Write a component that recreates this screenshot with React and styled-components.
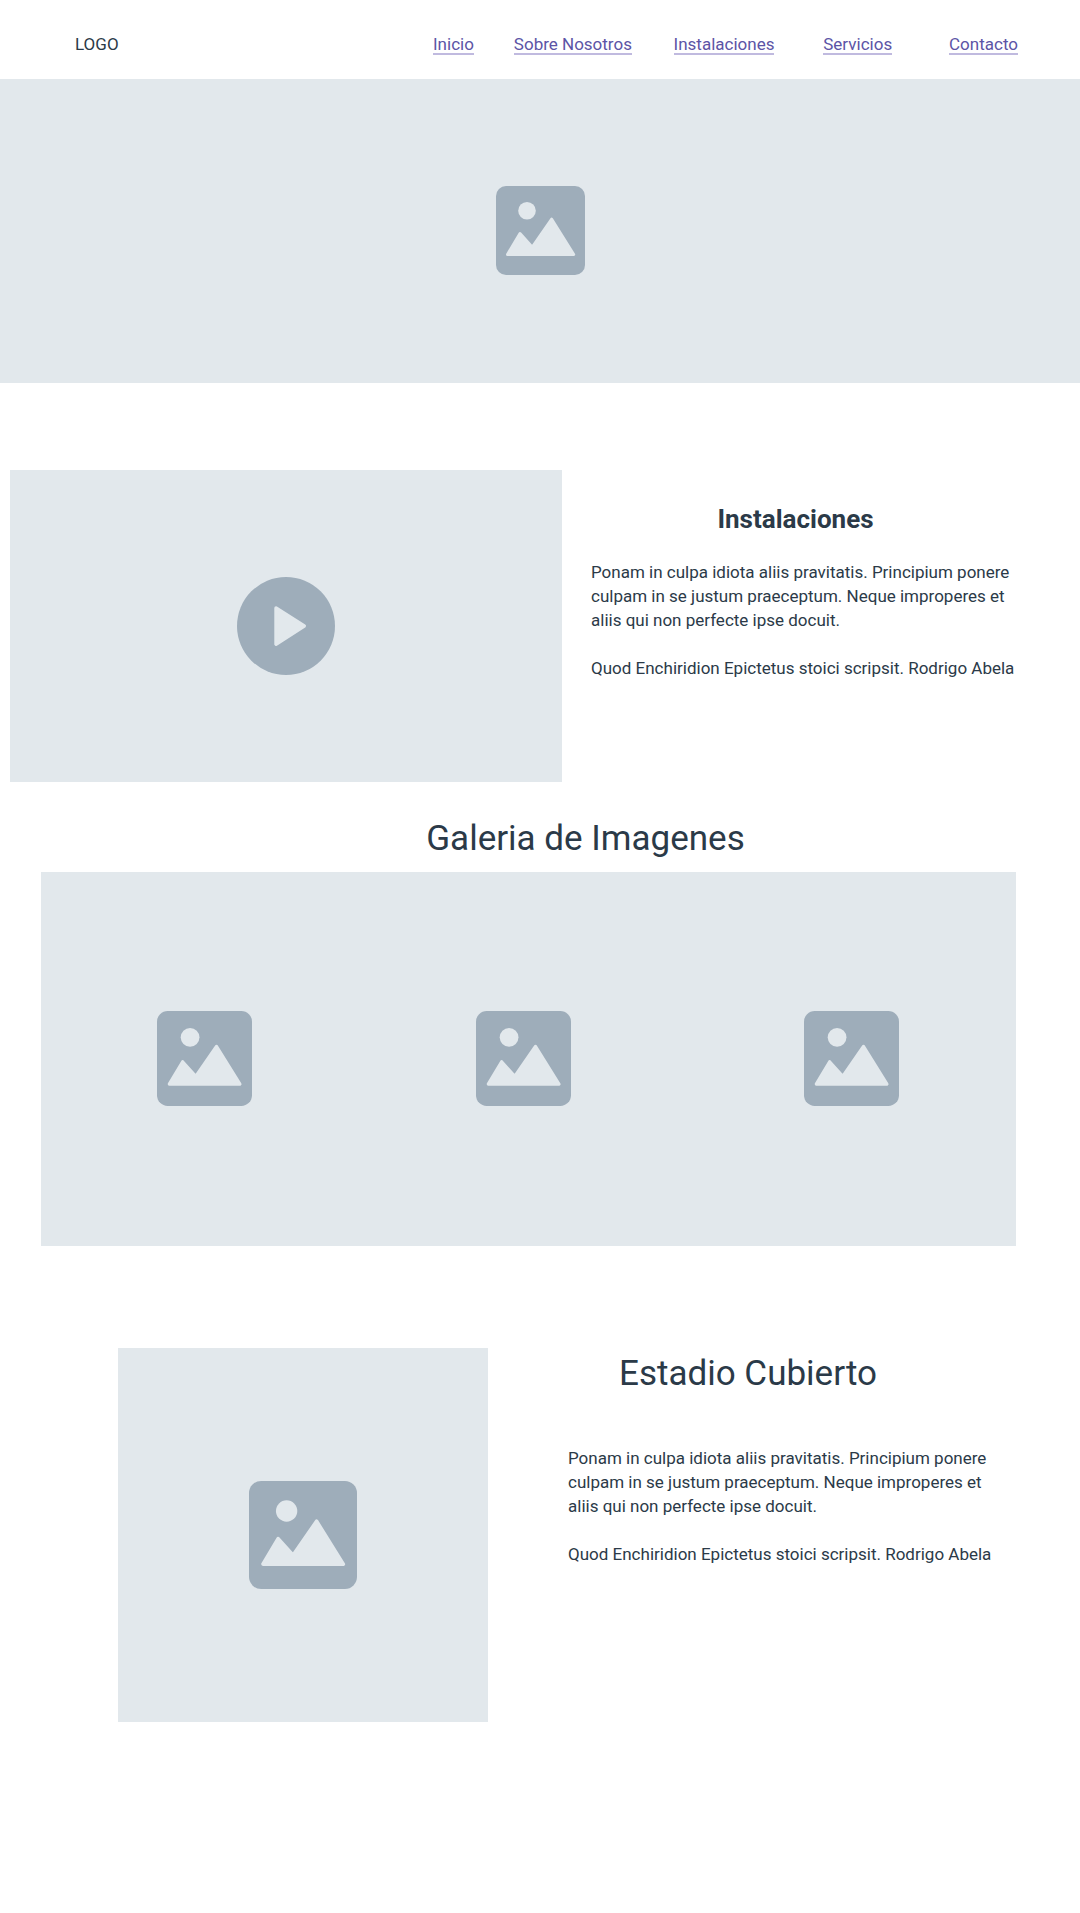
import React from "react";
import styled, { createGlobalStyle } from "styled-components";

const GlobalStyle = createGlobalStyle`
  * { box-sizing: border-box; }
  body {
    margin: 0;
    background: #ffffff;
    color: #2b3a48;
    font-family: Roboto, "Liberation Sans", sans-serif;
    font-size: 17px;
    line-height: 24px;
  }
  h1, h2, p { margin: 0; }
`;

const Header = styled.header`
  display: grid;
  grid-template-columns: 358fr 585fr;
  align-items: start;
  height: 79px;
  padding: 32px 62px 0 75px;
`;

const Logo = styled.span`
  line-height: 24px;
`;

const Nav = styled.nav`
  display: grid;
  grid-template-columns: 81fr 160fr 150fr 126fr 68fr;
  justify-items: start;
`;

const NavLink = styled.a`
  height: 23px;
  border-bottom: 2px solid #c0badf;
  color: #5c54a6;
  text-decoration: none;
  white-space: nowrap;
`;

const Placeholder = styled.div`
  display: grid;
  place-items: center;
  height: ${(p) => p.$height}px;
  padding-bottom: 1px;
  background: #e2e8ec;
`;

const Glyph = styled.svg`
  display: block;
  width: ${(p) => p.$size}px;
  height: ${(p) => p.$size}px;
`;

const Feature = styled.section`
  display: grid;
  grid-template-columns: 552fr 445fr;
  column-gap: 29px;
  padding: 87px 44px 0 10px;
`;

const Stadium = styled.section`
  display: grid;
  grid-template-columns: 370fr 445fr;
  column-gap: 80px;
  padding: 102px 67px 191px 118px;
`;

const Copy = styled.div`
  padding-top: ${(p) => p.$top}px;
`;

const Subtitle = styled.h2`
  padding-right: 36px;
  font-size: 26px;
  font-weight: 700;
  line-height: 32px;
  text-align: center;
`;

const Title = styled.h2`
  padding-left: ${(p) => p.$left || 0}px;
  padding-right: ${(p) => p.$right || 0}px;
  font-size: 35px;
  font-weight: 400;
  line-height: 44px;
  text-align: center;
`;

const Paragraphs = styled.div`
  display: grid;
  row-gap: 24px;
  padding-top: ${(p) => p.$top}px;
`;

const Gallery = styled.section`
  padding-top: 35px;
`;

const GalleryStrip = styled.div`
  display: grid;
  grid-template-columns: 319fr 328fr 95px;
  align-items: center;
  height: 374px;
  margin: 11px 64px 0 41px;
  padding: 0 117px 1px 116px;
  background: #e2e8ec;
`;

function ImageGlyph({ size }) {
  return (
    <Glyph $size={size} viewBox="0 0 89 89" aria-hidden="true">
      <rect width="89" height="89" rx="10" fill="#9eadba" />
      <circle cx="31" cy="24.7" r="8.8" fill="#e2e8ec" />
      <path
        d="M11.5 68.5 L24 47.5 L36.3 61.2 L55.7 33.2 L77.7 68.5 Z"
        fill="#e2e8ec"
        stroke="#e2e8ec"
        strokeWidth="3"
        strokeLinejoin="round"
      />
    </Glyph>
  );
}

function PlayGlyph() {
  return (
    <Glyph $size={98} viewBox="0 0 98 98" aria-hidden="true">
      <circle cx="49" cy="49" r="49" fill="#9eadba" />
      <path
        d="M39 31 L67.3 49 L39 67.2 Z"
        fill="#e2e8ec"
        stroke="#e2e8ec"
        strokeWidth="3.4"
        strokeLinejoin="round"
      />
    </Glyph>
  );
}

function Body({ top }) {
  return (
    <Paragraphs $top={top}>
      <p>
        Ponam in culpa idiota aliis pravitatis. Principium ponere culpam in se
        justum praeceptum. Neque improperes et aliis qui non perfecte ipse
        docuit.
      </p>
      <p>Quod Enchiridion Epictetus stoici scripsit. Rodrigo Abela</p>
    </Paragraphs>
  );
}

const links = [
  { label: "Inicio", href: "#inicio" },
  { label: "Sobre Nosotros", href: "#nosotros" },
  { label: "Instalaciones", href: "#instalaciones" },
  { label: "Servicios", href: "#servicios" },
  { label: "Contacto", href: "#contacto" },
];

export default function App() {
  return (
    <>
      <GlobalStyle />
      <Header>
        <Logo>LOGO</Logo>
        <Nav>
          {links.map((link) => (
            <NavLink key={link.href} href={link.href}>
              {link.label}
            </NavLink>
          ))}
        </Nav>
      </Header>
      <main>
        <Placeholder id="inicio" $height={304}>
          <ImageGlyph size={89} />
        </Placeholder>
        <Feature id="instalaciones">
          <Placeholder $height={312}>
            <PlayGlyph />
          </Placeholder>
          <Copy $top={33}>
            <Subtitle>Instalaciones</Subtitle>
            <Body top={25} />
          </Copy>
        </Feature>
        <Gallery>
          <Title $left={91}>Galeria de Imagenes</Title>
          <GalleryStrip>
            <ImageGlyph size={95} />
            <ImageGlyph size={95} />
            <ImageGlyph size={95} />
          </GalleryStrip>
        </Gallery>
        <Stadium>
          <Placeholder $height={374}>
            <ImageGlyph size={108} />
          </Placeholder>
          <Copy $top={4}>
            <Title $right={85}>Estadio Cubierto</Title>
            <Body top={50} />
          </Copy>
        </Stadium>
      </main>
    </>
  );
}
